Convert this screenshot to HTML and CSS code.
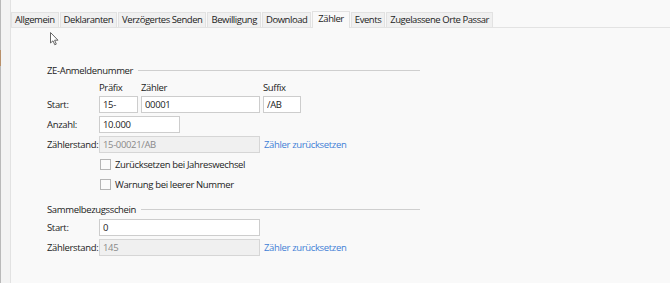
FILE: index.html
```html
<!DOCTYPE html>
<html lang="de">
<head>
    <meta charset="UTF-8">
    <title>Zähler</title>
    <link rel="stylesheet" href="styles.css">
</head>
<body>
<div class="window">
    <!-- left window edge -->
    <div class="edge"><span class="edge-mark"></span></div>

    <div class="main">
        <!-- Tabs -->
        <div class="tabs">
            <div class="tab">Allgemein</div>
            <div class="tab">Deklaranten</div>
            <div class="tab">Verzögertes Senden</div>
            <div class="tab">Bewilligung</div>
            <div class="tab">Download</div>
            <div class="tab active">Zähler</div>
            <div class="tab">Events</div>
            <div class="tab">Zugelassene Orte Passar</div>
        </div>

        <div class="panel">
            <!-- ZE-Anmeldenummer -->
            <div class="group">
                <div class="group-title"><span>ZE-Anmeldenummer</span></div>
                <div class="form form-ze">
                    <span class="col-head first">Präfix</span>
                    <span class="col-head">Zähler</span>
                    <span class="col-head">Suffix</span>

                    <label class="row-label">Start:</label>
                    <input class="field" type="text" value="15-">
                    <input class="field" type="text" value="00001">
                    <input class="field suffix" type="text" value="/AB">

                    <label class="row-label">Anzahl:</label>
                    <input class="field count" type="text" value="10.000">

                    <label class="row-label">Zählerstand:</label>
                    <input class="field wide" type="text" value="15-00021/AB" disabled>
                    <a class="link" href="#">Zähler zurücksetzen</a>

                    <label class="check"><span class="box"></span>Zurücksetzen bei Jahreswechsel</label>
                    <label class="check"><span class="box"></span>Warnung bei leerer Nummer</label>
                </div>
            </div>

            <!-- Sammelbezugsschein -->
            <div class="group">
                <div class="group-title"><span>Sammelbezugsschein</span></div>
                <div class="form form-sb">
                    <label class="row-label">Start:</label>
                    <input class="field" type="text" value="0">

                    <label class="row-label">Zählerstand:</label>
                    <input class="field" type="text" value="145" disabled>
                    <a class="link" href="#">Zähler zurücksetzen</a>
                </div>
            </div>
        </div>
    </div>

    <!-- mouse cursor -->
    <svg class="cursor" width="10" height="14" viewBox="0 0 10 14">
        <path d="M0.5 0.5 L0.5 11 L3 8.8 L4.8 12.8 L6.3 12.1 L4.6 8.2 L8 8.2 Z" fill="#fff" stroke="#666" stroke-width="1" stroke-linejoin="round"/>
    </svg>
</div>
</body>
</html>
```

FILE: styles.css
```css
/* Global */
* {
    margin: 0;
    padding: 0;
    box-sizing: border-box;
}

body {
    background: #f9f9f9;
    font-family: 'Open Sans', 'Noto Sans', sans-serif;
    font-size: 9.5px;
    font-weight: 450;
    letter-spacing: -0.35px;
    color: #1c1c1c;
}

.window {
    position: relative;
    display: flex;
    height: 283px;
    overflow: hidden;
}

/* Left edge */
.edge {
    width: 11px;
    background: #f3f3f3;
    border-left: 1px solid #b9b9b9;
    border-right: 1px solid #e2e2e2;
}

.edge-mark {
    display: block;
    width: 1px;
    height: 16px;
    margin: 50px 0 0 -1px;
    background: #b8906a;
}

.main {
    flex: 1;
}

/* Tabs */
.tabs {
    display: flex;
    align-items: flex-end;
    height: 28px;
    padding-left: 1px;
    margin-left: -1px;
    border-bottom: 1px solid #e3e3e3;
    letter-spacing: -0.45px;
}

.tab {
    height: 15px;
    line-height: 14px;
    padding: 0 3px;
    margin-right: 1px;
    background: #f0f0f0;
    border: 1px solid #e2e2e2;
    border-bottom: none;
    white-space: nowrap;
}

.tab.active {
    height: 17px;
    line-height: 13px;
    padding: 0 5px;
    margin-bottom: -1px;
    background: #f9f9f9;
}

/* Panel */
.panel {
    padding: 36px 0 0 36px;
}

.group {
    width: 373px;
    margin-bottom: 10px;
}

.group-title {
    display: flex;
    align-items: center;
    gap: 5px;
    height: 13px;
}

.group-title::after {
    content: "";
    flex: 1;
    border-top: 1px solid #cfcfcf;
}

/* Forms */
.form {
    display: grid;
    column-gap: 3px;
    row-gap: 3px;
    align-items: center;
}

.form-ze {
    grid-template-columns: 49px 39px 119px auto;
    margin-top: 4px;
}

.form-sb {
    grid-template-columns: 49px 161px auto;
    margin-top: 3px;
}

.row-label {
    grid-column: 1;
    white-space: nowrap;
}

.col-head {
    height: 13px;
    line-height: 13px;
    margin-bottom: -1px;
}

.col-head.first {
    grid-column: 2;
}

.field {
    height: 17px;
    padding: 0 3px;
    border: 1px solid #cdcdcd;
    background: #fff;
    font: inherit;
    letter-spacing: inherit;
    color: #1c1c1c;
    outline: none;
}

.field:disabled {
    background: #f0f0f0;
    border-color: #d6d6d6;
    color: #8a8a8a;
}

.suffix {
    width: 38px;
}

.count {
    grid-column: 2 / 4;
    width: 81px;
}

.wide {
    grid-column: 2 / 4;
}

.link {
    color: #3f7fd6;
    text-decoration: none;
    margin-left: 1px;
}

.check {
    grid-column: 2 / -1;
    display: flex;
    align-items: center;
    height: 17px;
}

.box {
    width: 11px;
    height: 11px;
    margin: 0 4px 0 1px;
    border: 1px solid #b5b5b5;
    background: #fbfbfb;
}

/* Cursor overlay */
.cursor {
    position: absolute;
    left: 50px;
    top: 32px;
}
```
